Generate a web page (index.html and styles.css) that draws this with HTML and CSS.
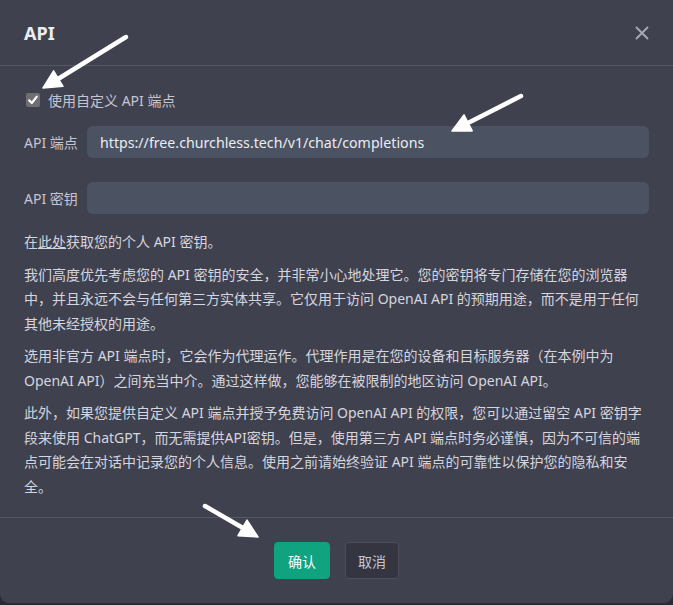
FILE: index.html
```html
<!DOCTYPE html>
<html lang="zh-CN">
<head>
<meta charset="utf-8">
<title>API</title>
<link rel="stylesheet" href="styles.css">
</head>
<body>
<div class="modal">
  <header class="modal-header">
    <h2 class="modal-title">API</h2>
    <button class="close-btn" aria-label="关闭">
      <svg width="14" height="14" viewBox="0 0 14 14"><path d="M1.5 1.5 L12.5 12.5 M12.5 1.5 L1.5 12.5" stroke="#a9aab5" stroke-width="1.8" stroke-linecap="round"/></svg>
    </button>
  </header>
  <section class="modal-body">
    <label class="check-row">
      <span class="checkbox"><svg width="14" height="14" viewBox="0 0 14 14"><path d="M3.2 7.4 L5.8 10 L10.8 3.6" fill="none" stroke="#fff" stroke-width="2.2" stroke-linecap="round" stroke-linejoin="round"/></svg></span>
      <span>使用自定义 API 端点</span>
    </label>
    <div class="field-row">
      <span class="field-label">API 端点</span>
      <div class="input">https://free.churchless.tech/v1/chat/completions</div>
    </div>
    <div class="field-row second">
      <span class="field-label">API 密钥</span>
      <div class="input"></div>
    </div>
    <div class="info">
      <p>在<a href="#">此处</a>获取您的个人 API 密钥。</p>
      <p>我们高度优先考虑您的 API 密钥的安全，并非常小心地处理它。您的密钥将专门存储在您的浏览器中，并且永远不会与任何第三方实体共享。它仅用于访问 OpenAI API 的预期用途，而不是用于任何其他未经授权的用途。</p>
      <p>选用非官方 API 端点时，它会作为代理运作。代理作用是在您的设备和目标服务器（在本例中为 OpenAI API）之间充当中介。通过这样做，您能够在被限制的地区访问 OpenAI API。</p>
      <p>此外，如果您提供自定义 API 端点并授予免费访问 OpenAI API 的权限，您可以通过留空 API 密钥字段来使用 ChatGPT，而无需提供API密钥。但是，使用第三方 API 端点时务必谨慎，因为不可信的端点可能会在对话中记录您的个人信息。使用之前请始终验证 API 端点的可靠性以保护您的隐私和安全。</p>
    </div>
  </section>
  <footer class="modal-footer">
    <button class="btn btn-primary">确认</button>
    <button class="btn btn-secondary">取消</button>
  </footer>
</div>
<svg class="arrows" width="673" height="605" viewBox="0 0 673 605">
  <g stroke="#fff" stroke-width="4.5" stroke-linecap="round" fill="#fff">
    <line x1="126" y1="37" x2="58" y2="79"/>
    <line x1="521" y1="96" x2="468" y2="123"/>
    <line x1="205" y1="506" x2="243" y2="528"/>
  </g>
  <g fill="#fff" stroke="#fff" stroke-width="1.5" stroke-linejoin="round">
    <polygon points="43,88 53.6,70.9 63,86.3"/>
    <polygon points="452,131 464,114.9 472.2,130.9"/>
    <polygon points="258,537 238,535.7 247,520.1"/>
  </g>
</svg>
</body>
</html>
```

FILE: styles.css
```css
* { box-sizing: border-box; }
html, body {
  margin: 0;
  padding: 0;
  background: #2a2b32;
}
body {
  width: 673px;
  height: 605px;
  overflow: hidden;
  position: relative;
  font-family: "Noto Sans", "Noto Sans CJK SC", sans-serif;
  color: #d9d9e3;
}
.modal {
  width: 673px;
  height: 603px;
  background: #40414f;
  border-radius: 0 0 9px 9px;
  display: flex;
  flex-direction: column;
}
.modal-header {
  height: 66px;
  border-bottom: 1px solid #555766;
  display: flex;
  align-items: center;
  justify-content: space-between;
  padding: 0 24px 0 24px;
}
.modal-title {
  margin: 0;
  font-size: 18px;
  font-weight: 700;
  color: #ececf1;
  font-family: "Noto Sans", "Noto Sans CJK SC", sans-serif;
}
.close-btn {
  background: none;
  border: none;
  padding: 0;
  width: 14px;
  height: 14px;
  display: flex;
  cursor: pointer;
}
.modal-body {
  padding: 24px 24px 18px 24px;
  flex: 1;
}
.check-row {
  display: flex;
  align-items: center;
  gap: 8px;
  font-size: 14px;
  color: #c5c5d2;
  height: 20px;
}
.checkbox {
  width: 14px;
  height: 14px;
  border-radius: 2px;
  background: #6e6e73;
  display: flex;
  margin-left: 2px;
}
.field-row {
  display: flex;
  align-items: center;
  gap: 14px;
  margin-top: 16px;
}
.field-row.second { margin-top: 24px; }
.field-label {
  font-size: 14px;
  color: #c5c5d2;
  white-space: nowrap;
  width: 49px;
}
.input {
  flex: 1;
  height: 32px;
  background: #4b5262;
  border-radius: 6px;
  padding: 0 13px;
  display: flex;
  align-items: center;
  font-size: 14.2px;
  color: #ececf1;
}
.info {
  margin-top: 16px;
  font-size: 14px;
  line-height: 24.5px;
  color: #d5d5de;
}
.info p { margin: 0 0 8px 0; }
.info p:last-child { margin-bottom: 0; }
.info a {
  color: #d5d5de;
  text-decoration: underline;
}
.modal-footer {
  border-top: 1px solid #555766;
  display: flex;
  justify-content: center;
  gap: 15px;
  padding: 24px 0 24px 0;
}
.btn {
  height: 37px;
  padding: 0 13px;
  border-radius: 4px;
  font-family: "Noto Sans CJK SC", sans-serif;
  font-size: 14px;
  cursor: pointer;
}
.btn-primary {
  background: #10a37f;
  color: #fff;
  border: 1px solid #10a37f;
}
.btn-secondary {
  background: #343541;
  color: #c5c5d2;
  border: 1px solid #4d4f5c;
  padding: 0 12px;
}
.arrows {
  position: absolute;
  left: 0;
  top: 0;
  pointer-events: none;
}
```
